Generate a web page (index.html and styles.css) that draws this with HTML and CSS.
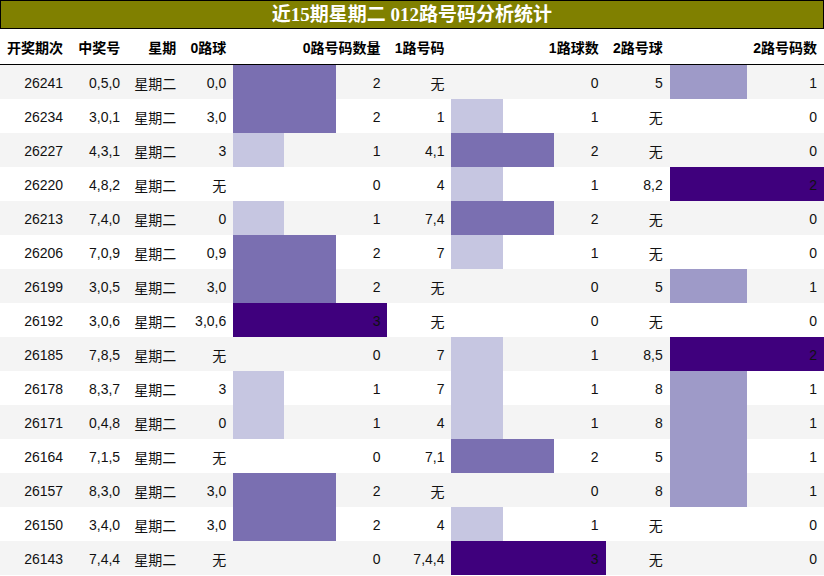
FILE: index.html
```html
<!DOCTYPE html>
<html lang="zh">
<head>
<meta charset="utf-8">
<title>近15期星期二 012路号码分析统计</title>
<link rel="stylesheet" href="styles.css">
</head>
<body>
<div class="page">
  <div class="title">近15期星期二 012路号码分析统计</div>
  <table class="stats">
    <colgroup>
      <col class="c-issue"><col class="c-num"><col class="c-week"><col class="c-ball">
      <col class="c-bar"><col class="c-ball2"><col class="c-bar"><col class="c-ball2"><col class="c-bar">
    </colgroup>
    <thead>
      <tr><th>开奖期次</th><th>中奖号</th><th>星期</th><th>0路球</th><th>0路号码数量</th><th>1路号码</th><th>1路球数</th><th>2路号球</th><th>2路号码数</th></tr>
    </thead>
    <tbody>
      <tr><td>26241</td><td>0,5,0</td><td>星期二</td><td>0,0</td><td class="bar m" style="--w:66.667%">2</td><td>无</td><td class="bar">0</td><td>5</td><td class="bar h" style="--w:50%">1</td></tr>
      <tr><td>26234</td><td>3,0,1</td><td>星期二</td><td>3,0</td><td class="bar m" style="--w:66.667%">2</td><td>1</td><td class="bar l" style="--w:33.333%">1</td><td>无</td><td class="bar">0</td></tr>
      <tr><td>26227</td><td>4,3,1</td><td>星期二</td><td>3</td><td class="bar l" style="--w:33.333%">1</td><td>4,1</td><td class="bar m" style="--w:66.667%">2</td><td>无</td><td class="bar">0</td></tr>
      <tr><td>26220</td><td>4,8,2</td><td>星期二</td><td>无</td><td class="bar">0</td><td>4</td><td class="bar l" style="--w:33.333%">1</td><td>8,2</td><td class="bar d" style="--w:100%">2</td></tr>
      <tr><td>26213</td><td>7,4,0</td><td>星期二</td><td>0</td><td class="bar l" style="--w:33.333%">1</td><td>7,4</td><td class="bar m" style="--w:66.667%">2</td><td>无</td><td class="bar">0</td></tr>
      <tr><td>26206</td><td>7,0,9</td><td>星期二</td><td>0,9</td><td class="bar m" style="--w:66.667%">2</td><td>7</td><td class="bar l" style="--w:33.333%">1</td><td>无</td><td class="bar">0</td></tr>
      <tr><td>26199</td><td>3,0,5</td><td>星期二</td><td>3,0</td><td class="bar m" style="--w:66.667%">2</td><td>无</td><td class="bar">0</td><td>5</td><td class="bar h" style="--w:50%">1</td></tr>
      <tr><td>26192</td><td>3,0,6</td><td>星期二</td><td>3,0,6</td><td class="bar d" style="--w:100%">3</td><td>无</td><td class="bar">0</td><td>无</td><td class="bar">0</td></tr>
      <tr><td>26185</td><td>7,8,5</td><td>星期二</td><td>无</td><td class="bar">0</td><td>7</td><td class="bar l" style="--w:33.333%">1</td><td>8,5</td><td class="bar d" style="--w:100%">2</td></tr>
      <tr><td>26178</td><td>8,3,7</td><td>星期二</td><td>3</td><td class="bar l" style="--w:33.333%">1</td><td>7</td><td class="bar l" style="--w:33.333%">1</td><td>8</td><td class="bar h" style="--w:50%">1</td></tr>
      <tr><td>26171</td><td>0,4,8</td><td>星期二</td><td>0</td><td class="bar l" style="--w:33.333%">1</td><td>4</td><td class="bar l" style="--w:33.333%">1</td><td>8</td><td class="bar h" style="--w:50%">1</td></tr>
      <tr><td>26164</td><td>7,1,5</td><td>星期二</td><td>无</td><td class="bar">0</td><td>7,1</td><td class="bar m" style="--w:66.667%">2</td><td>5</td><td class="bar h" style="--w:50%">1</td></tr>
      <tr><td>26157</td><td>8,3,0</td><td>星期二</td><td>3,0</td><td class="bar m" style="--w:66.667%">2</td><td>无</td><td class="bar">0</td><td>8</td><td class="bar h" style="--w:50%">1</td></tr>
      <tr><td>26150</td><td>3,4,0</td><td>星期二</td><td>3,0</td><td class="bar m" style="--w:66.667%">2</td><td>4</td><td class="bar l" style="--w:33.333%">1</td><td>无</td><td class="bar">0</td></tr>
      <tr><td>26143</td><td>7,4,4</td><td>星期二</td><td>无</td><td class="bar">0</td><td>7,4,4</td><td class="bar d" style="--w:100%">3</td><td>无</td><td class="bar">0</td></tr>
    </tbody>
  </table>
</div>
</body>
</html>
```
FILE: styles.css
```css
html, body {
  margin: 0;
  padding: 0;
  background: #ffffff;
}
.page {
  width: 824px;
  font-family: "Liberation Sans", "Noto Sans CJK SC", Arial, sans-serif;
  color: #000;
}
.title {
  box-sizing: border-box;
  height: 29px;
  border: 1px solid #000;
  background: #808000;
  color: #ffffff;
  font-family: "Liberation Serif", "Noto Sans CJK SC", serif;
  font-weight: bold;
  font-size: 19px;
  line-height: 27px;
  text-align: center;
}
.stats {
  width: 824px;
  table-layout: fixed;
  border-collapse: collapse;
  border-spacing: 0;
  font-size: 14px;
}
.c-issue { width: 70px; }
.c-num { width: 57px; }
.c-week { width: 56px; }
.c-ball { width: 50px; }
.c-bar { width: 154px; }
.c-ball2 { width: 64px; }
.stats th {
  height: 35px;
  padding: 0 7px 0 0;
  text-align: right;
  font-weight: bold;
  border-bottom: 1px solid #000;
  white-space: nowrap;
  vertical-align: middle;
}
.stats td {
  height: 34px;
  padding: 2px 7px 0 0;
  box-sizing: border-box;
  text-align: right;
  white-space: nowrap;
  vertical-align: middle;
  color: #111;
}
.stats tbody tr:nth-child(odd) td {
  background-color: #f4f4f4;
}
.stats tbody tr:nth-child(even) td {
  background-color: #ffffff;
}
.bar {
  --w: 0%;
  --c: transparent;
  background-image: linear-gradient(to right, var(--c) 0, var(--c) var(--w), transparent var(--w));
  background-repeat: no-repeat;
}
.bar.l { --c: #c6c6e1; }
.bar.h { --c: #9e9ac8; }
.bar.m { --c: #7a6fb1; }
.bar.d { --c: #3f007d; }
```
